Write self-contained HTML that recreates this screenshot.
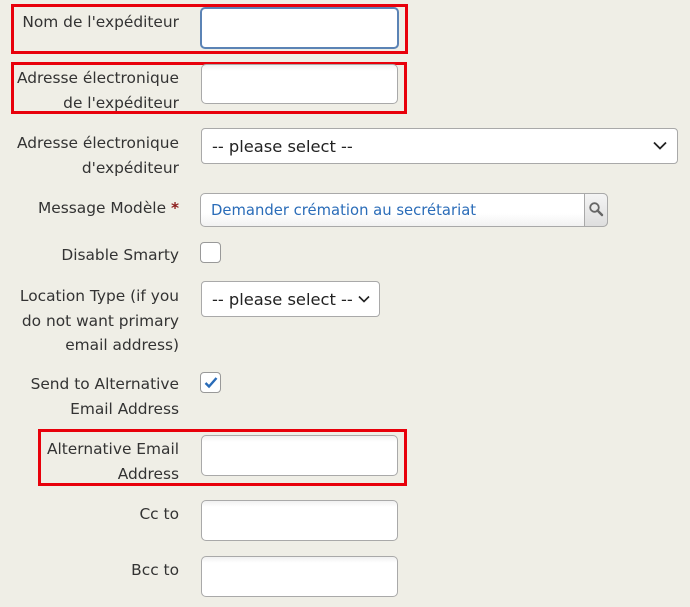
<!DOCTYPE html>
<html><head><meta charset="utf-8"><style>
body{margin:0;width:690px;height:607px;background:#efeee6;position:relative;overflow:hidden;font-family:"DejaVu Sans","Liberation Sans",sans-serif;font-size:15.4px;color:#333;}
.a{position:absolute;}
.lbl{position:absolute;right:511px;text-align:right;line-height:24.5px;white-space:nowrap;}
.red{position:absolute;border:3px solid #e8000b;box-sizing:border-box;}
.inp{position:absolute;background:linear-gradient(#f1f1f1,#fff 6px);border:1px solid #a9a9a9;border-radius:5px;box-sizing:border-box;}
.sel{position:absolute;background:#fff;border:1px solid #a9a9a9;border-radius:4px;box-sizing:border-box;font-size:16.3px;color:#222;padding-left:10px;}
.cb{position:absolute;width:21px;height:21px;border:1px solid #999;border-radius:4px;background:#fff;box-sizing:border-box;}
</style></head><body>
<div class="red" style="left:11px;top:4px;width:397px;height:50px"></div>
<div class="lbl" style="top:10px">Nom de l'expéditeur</div>
<div class="inp" style="left:200px;top:7px;width:199px;height:42px;border:2px solid #5b83b5;background:#fff"></div>

<div class="red" style="left:11px;top:62px;width:396px;height:52px"></div>
<div class="lbl" style="top:66px">Adresse électronique<br>de l'expéditeur</div>
<div class="inp" style="left:201px;top:64px;width:197px;height:40px"></div>

<div class="lbl" style="top:131px">Adresse électronique<br>d'expéditeur</div>
<div class="sel" style="left:201px;top:128px;width:477px;height:36px;line-height:36px">-- please select --
<svg class="a" style="right:10px;top:12px" width="14" height="9" viewBox="0 0 14 9"><path d="M1 1.5 L7 7.5 L13 1.5" fill="none" stroke="#222" stroke-width="1.8"/></svg></div>

<div class="lbl" style="top:196px">Message Modèle <span style="color:#8b1a1a;font-weight:bold">*</span></div>
<div class="inp" style="left:200px;top:193px;width:408px;height:34px;background:linear-gradient(#fff,#fff 60%,#f2f2f2);border-radius:5px;color:#2a6cb8;font-size:14.8px;line-height:34px;padding-left:10px">Demander crémation au secrétariat</div>
<div class="a" style="left:584px;top:193px;width:24px;height:34px;border:1px solid #a9a9a9;border-radius:0 5px 5px 0;box-sizing:border-box;background:linear-gradient(#f4f4f4,#dedede)">
<svg class="a" style="left:3px;top:7px" width="16" height="16" viewBox="0 0 16 16"><circle cx="6.5" cy="6.5" r="4.3" fill="none" stroke="#666" stroke-width="1.8"/><path d="M9.5 9.5 L14 14" stroke="#666" stroke-width="2.4" stroke-linecap="round"/></svg></div>

<div class="lbl" style="top:243px">Disable Smarty</div>
<div class="cb" style="left:200px;top:242px"></div>

<div class="lbl" style="top:284px">Location Type (if you<br>do not want primary<br>email address)</div>
<div class="sel" style="left:201px;top:281px;width:179px;height:36px;line-height:36px">-- please select --
<svg class="a" style="right:9px;top:13px" width="12" height="8" viewBox="0 0 12 8"><path d="M1 1.5 L6 6.5 L11 1.5" fill="none" stroke="#222" stroke-width="1.6"/></svg></div>

<div class="lbl" style="top:372px">Send to Alternative<br>Email Address</div>
<div class="cb" style="left:200px;top:372px"><svg class="a" style="left:3px;top:3px" width="14" height="13" viewBox="0 0 14 13"><path d="M1.5 7 L5 10.5 L12.5 2" fill="none" stroke="#2a6cb8" stroke-width="2.4"/></svg></div>

<div class="red" style="left:38px;top:429px;width:369px;height:57px"></div>
<div class="lbl" style="top:437px">Alternative Email<br>Address</div>
<div class="inp" style="left:201px;top:435px;width:197px;height:41px"></div>

<div class="lbl" style="top:502px">Cc to</div>
<div class="inp" style="left:201px;top:500px;width:197px;height:41px"></div>

<div class="lbl" style="top:558px">Bcc to</div>
<div class="inp" style="left:201px;top:556px;width:197px;height:41px"></div>
</body></html>
